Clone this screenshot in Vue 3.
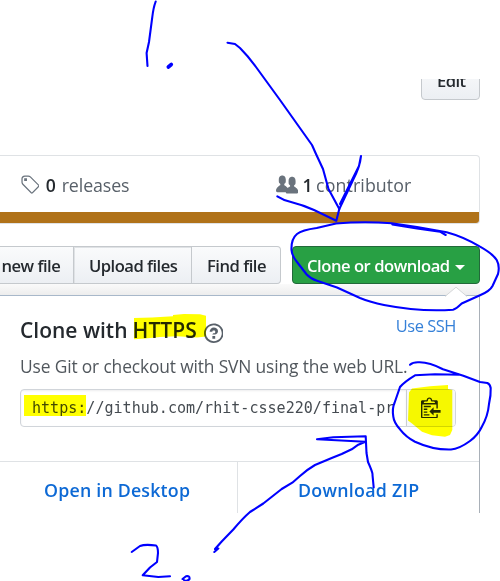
<script setup>
const strokes = [
  'M155.7 1.5C154 6 153 11 152.3 17L149 42L146.6 53L147.5 66',
  'M227.5 42.7L235 44L240 48Q248 56 256 67L280 100L312 145L316 154L323 169L328.5 189L339.3 209',
  'M277.3 196.3Q283 200 291 202Q303 205 314 210L336.3 220.7L339.3 209L353 180Q360 167 361 156L359 166L340 204',
  'M445.7 235L440 231.7L417 228.5L392.3 224.5',
  'M391.7 223.3Q364 221 336 223.5L316.7 228Q302 230 297 234Q291 239 291.5 250Q292 256 297 262L306.7 274.5Q311 279 317 280.7L337 287.5L360 298Q370 302 384 305Q420 312 453 309.7Q456 309 461.7 303.5L480 295.3Q490 291 492.5 286L498 274Q500 266 496.7 260Q493 254 480 246.7Q464 237 446.7 232.3L417 227L391.7 223.3',
  'M410 364.7Q413 362 419 362.3Q429 362 443 369.3L463.3 375.7L480 382L487.3 383Q490 384 490.7 388Q491 395 489 404Q488 416 481.7 427Q478 435 470 441Q459 449 451 449.5Q433 450 415 441.7Q406 437 400 429.3Q394 423 393.3 416.7Q392 408 394.5 403L400 387Q404 382 415 375.3L435 374.3L460 374.7',
  'M214.3 552L218.3 548.5L215 549L221.7 541.5L233.3 529.5Q243 518 250 512L263.3 503.5L281.7 489L292.3 482.7L300 476Q308 469 315 465L331.7 458L341.7 454L351.7 449.3L358.3 444.7L365.3 441.8L317 439.3L333.3 437.2L365.7 436.3L366.5 453L368 462Q373 473 372.5 475L373.7 487.5',
  'M131.7 552L140 546Q145 544 156 545.5Q158 547 158 553L157 562L150 567.5L142.7 575.3L158.3 577L170 576.3',
  'M182.5 579L186 576.2Q190 575.5 189.5 579Q187 582 184 580',
]
const ticks = ['M168.3 67L171.3 64.5']
</script>

<template>
  <div class="page">
    <div class="capture">
      <header class="top"><button class="btn edit"><span class="t-edit">Edit</span></button></header>

      <section class="summary">
        <div class="stats">
          <svg class="ico tag" viewBox="0 0 14 16"><path fill-rule="evenodd" d="M7.685 1.72a2.49 2.49 0 0 0-1.76-.726H3.48A2.5 2.5 0 0 0 .994 3.48v2.456c0 .656.269 1.292.726 1.76l6.024 6.024a.99.99 0 0 0 1.402 0l4.563-4.563a.99.99 0 0 0 0-1.402L7.685 1.72zM2.366 7.048a1.54 1.54 0 0 1-.467-1.123V3.48c0-.874.716-1.58 1.58-1.58h2.456c.418 0 .825.159 1.123.467l6.104 6.094-4.702 4.702-6.094-6.114zm.626-4.066h1.989v1.989H2.982V2.982z" /></svg>
          <span class="stat releases"><b>0</b><span class="t-rel">releases</span></span>
          <svg class="ico people" viewBox="0 0 16 16"><path d="M16 12.999c0 .439-.45 1-1 1H7.995c-.539 0-.994-.447-.995-.999H1c-.54 0-1-.561-1-1 0-2.634 3-4 3-4s.229-.409 0-1c-.841-.621-1.058-.59-1-3 .058-2.419 1.367-3 2.5-3s2.442.58 2.5 3c.058 2.41-.159 2.379-1 3-.229.59 0 1 0 1s1.549.711 2.42 2.088C9.196 9.369 10 8.999 10 8.999s.229-.409 0-1c-.841-.62-1.058-.59-1-3 .058-2.419 1.367-3 2.5-3s2.437.581 2.495 3c.059 2.41-.158 2.38-1 3-.229.59 0 1 0 1s3.005 1.366 3.005 4" /></svg>
          <span class="stat"><b>1</b><span class="t-con">contributor</span></span>
        </div>
        <div class="language"></div>
      </section>

      <nav class="actions">
        <button class="btn b-new"><span class="t-new">new file</span></button>
        <button class="btn b-upload"><span class="t-upload">Upload files</span></button>
        <button class="btn b-find"><span class="t-find">Find file</span></button>
        <button class="btn clone"><span class="t-clone">Clone or download</span><i class="caret"></i></button>
      </nav>

      <div class="gap"></div>
      <section class="panel">
        <svg class="pointer" viewBox="0 0 22 10"><path d="M0 10L11 .7L22 10" fill="#fff" stroke="#d4d6d8" /></svg>
        <div class="title">
          <h4><span class="t-cw">Clone with</span><span class="t-https">HTTPS</span></h4>
          <svg class="ico help" viewBox="0 0 14 16"><path fill-rule="evenodd" d="M6 10h2v2H6v-2zm4-3.5C10 8.64 8 9 8 9H6c0-.55.45-1 1-1h.5c.28 0 .5-.22.5-.5v-1c0-.28-.22-.5-.5-.5h-1c-.28 0-.5.22-.5.5V7H4c0-1.5 1.5-3 3-3s3 1 3 2.5zM7 2.3c3.14 0 5.7 2.56 5.7 5.7s-2.56 5.7-5.7 5.7A5.71 5.71 0 0 1 1.3 8c0-3.14 2.56-5.7 5.7-5.7zM7 1C3.14 1 0 4.14 0 8s3.14 7 7 7 7-3.14 7-7-3.14-7-7-7z" /></svg>
          <a class="ssh">Use SSH</a>
        </div>
        <p class="hint">Use Git or checkout with SVN using the web URL.</p>
        <div class="field">
          <div class="url"><span>https://github.com/rhit-csse220/final-pr</span></div>
          <button class="copy"><svg class="ico clippy" viewBox="0 0 14 16"><path fill-rule="evenodd" d="M2 13h4v1H2v-1zm5-6H2v1h5V7zm2 3V8l-3 3 3 3v-2h5v-2H9zM4.5 9H2v1h2.5V9zM2 12h2.5v-1H2v1zm9 1h1v2c-.02.28-.11.52-.3.7-.19.18-.42.28-.7.3H1c-.55 0-1-.45-1-1V4c0-.55.45-1 1-1h3c0-1.11.89-2 2-2 1.11 0 2 .89 2 2h3c.55 0 1 .45 1 1v5h-1V6H1v9h10v-2zM2 5h8c0-.55-.45-1-1-1H8c-.55 0-1-.45-1-1s-.45-1-1-1-1 .45-1 1-.45 1-1 1H3c-.55 0-1 .45-1 1z" /></svg></button>
        </div>
        <div class="links">
          <a class="open"><span class="t-open">Open in Desktop</span></a>
          <a class="zip"><span class="t-zip">Download ZIP</span></a>
        </div>
      </section>
    </div>

    <svg class="layer marker" viewBox="0 0 500 581">
      <path d="M134 318L152 317.5L173 316.3V315L184 314L200 314.3L206 315.7V336.5L197 337.5L177 336.3L160 337L145 338.5L134 339.3Z" />
      <path d="M24 395H86V416H24Z" />
      <path d="M409 392.5L412 388.5L424 387L430 386.3L448 385V389L452.3 390V430L450 435L445 436.7L432 435.3L422 431.7L412 423.5L408 420.5Z" />
    </svg>
    <svg class="layer ink" viewBox="0 0 500 581">
      <path v-for="d in strokes" :key="d" :d="d" />
      <path v-for="d in ticks" :key="d" :d="d" class="thick" />
    </svg>
  </div>
</template>

<style>
body { margin: 0; background: #fff; }
</style>

<style scoped>
.page { position: relative; width: 500px; height: 581px; overflow: hidden; background: #fff; font-family: "Open Sans", "Noto Sans", sans-serif; color: #24292e; }
.page * { box-sizing: border-box; }
.capture { width: 480px; padding-top: 79px; }
span, a, p, h4 { white-space: nowrap; }
.btn { display: flex; align-items: center; height: 38px; margin: 0; padding: 1px 0 0; font: 600 16.6px/24px "Open Sans", sans-serif; color: #24292e; background: linear-gradient(#fafbfc, #eceff3); border: 1px solid #c5c9cd; }
.top { display: flex; justify-content: flex-end; align-items: flex-end; height: 21px; overflow: hidden; }
.edit { flex: none; width: 59px; padding: 0 0 1px 15px; border-radius: 4px; letter-spacing: -.6px; }
.ico { display: block; flex: none; fill: #6a737d; }
.summary { height: 69px; margin-top: 55px; border: 1px solid #dfe2e5; border-left: 0; border-radius: 0 4px 4px 0; overflow: hidden; }
.stats { display: flex; align-items: center; height: 56px; padding: 3px 0 0 19.6px; }
.tag { width: 19.6px; height: 22.4px; margin-right: 6.5px; }
.people { width: 22.4px; height: 22.4px; margin-right: 4.5px; }
.stat { display: flex; font-size: 17.8px; line-height: 24px; margin-top: -2px; color: #586069; }
.stat b { width: 16px; font-weight: 600; font-size: 17.6px; color: #24292e; }
.stat b + span { flex: none; }
.stat:last-child b { width: 13.5px; }
.releases { width: 230px; }
.t-con { letter-spacing: .1px; }
.t-rel { letter-spacing: -.1px; }
.language { height: 11px; background: #b07219; }
.actions { display: flex; height: 38px; margin-top: 22px; }
.b-new { width: 74px; padding-left: 1.5px; border-left: 0; letter-spacing: -.5px; }
.b-upload { width: 118px; padding-left: 15px; border-left: 0; box-shadow: inset 1px 1px #dfe2e5; letter-spacing: -.53px; }
.b-find { width: 89px; padding-left: 15px; border-left: 0; border-radius: 0 4px 4px 0; letter-spacing: -.5px; }
.clone { width: 188px; margin-left: 11px; padding-left: 14px; color: #fff; background: #28a044; border-color: #22693a; border-radius: 4px; letter-spacing: -.46px; }
.caret { margin-left: 5px; margin-top: 3px; border: 5px solid transparent; border-top-color: #fff; border-bottom: 0; }
.gap { height: 11px; background: linear-gradient(#fafafa, #ededed); }
.panel { position: relative; height: 218px; border-top: 1px solid #a8b8ca; border-right: 1px solid #a9b0b8; background: #fff; }
.pointer { position: absolute; right: 12px; top: -10px; width: 22px; height: 11px; }
.title { display: flex; height: 53px; padding: 20px 23px 0 20px; }
h4 { display: flex; margin: 0; font-size: 21px; line-height: 28px; font-weight: 600; }
.t-cw { width: 112.5px; }
.t-https { width: 71px; letter-spacing: .1px; }
.help { width: 19.6px; height: 22.4px; margin-top: 5.5px; fill: #586069; }
.ssh { margin-left: auto; font-size: 16.4px; line-height: 20px; color: #3580d8; letter-spacing: -.45px; }
.hint { margin: 0 0 0 20px; height: 40px; font-size: 17.4px; line-height: 35px; color: #51575d; letter-spacing: -.15px; }
.field { display: flex; width: 436px; height: 38px; margin-left: 20px; border: 1px solid #d1d5da; border-radius: 4px; overflow: hidden; }
.url { width: 385px; padding-left: 11px; font: 15.06px/36px "DejaVu Sans Mono", monospace; color: #454b51; box-shadow: inset 0 1px 2px rgba(27, 31, 35, .075); }
.url span { display: block; width: 362px; overflow: hidden; }
.copy { display: flex; flex: 1; padding: 6px 0 0 14px; margin: 0; border: 0; border-left: 1px solid #c9cdd1; background: #f6f8fa; }
.clippy { width: 19.6px; height: 22.4px; fill: #24292e; }
.links { display: flex; height: 52px; margin-top: 34px; border-top: 1px solid #dfe2e5; font-size: 17.8px; font-weight: 600; line-height: 57px; color: #0d69d5; letter-spacing: .2px; }
.open { width: 238px; padding-left: 44px; border-right: 1px solid #dfe2e5; }
.zip { padding-left: 60px; letter-spacing: .28px; }
.layer { position: absolute; left: 0; top: 0; width: 500px; height: 581px; pointer-events: none; }
.marker { mix-blend-mode: multiply; fill: #ff0; }
.ink { fill: none; stroke: #00f; stroke-width: 2.1; stroke-linecap: round; stroke-linejoin: round; }
.thick { stroke-width: 3.6; }
</style>
